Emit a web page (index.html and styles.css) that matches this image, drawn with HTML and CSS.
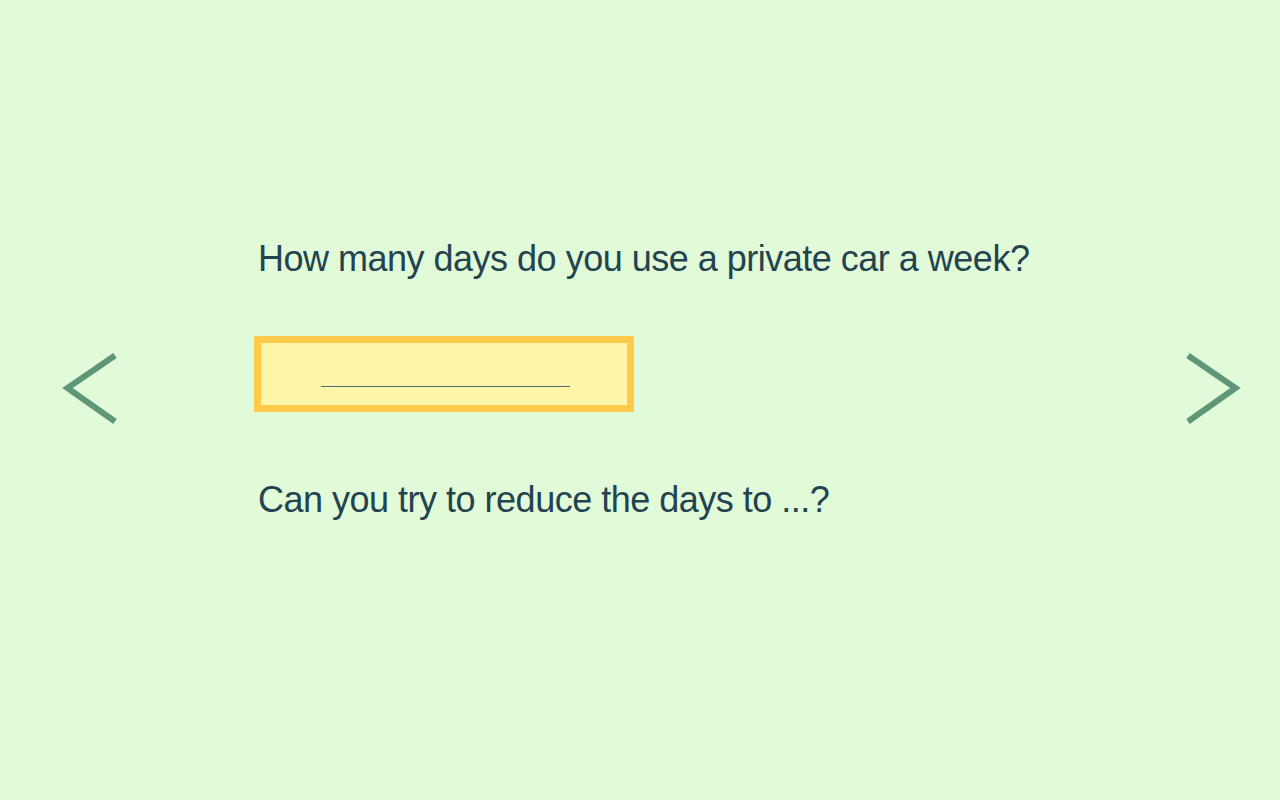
FILE: index.html
```html
<!DOCTYPE html>
<html lang="en">
<head>
<meta charset="utf-8">
<title>Question</title>
<link rel="stylesheet" href="styles.css">
</head>
<body>
<div class="stage">
  <button class="nav nav-prev" aria-label="Previous">
    <svg width="60" height="74" viewBox="0 0 60 74"><polyline points="55,3.5 7.5,36 55,69.5" fill="none" stroke="#5f9677" stroke-width="6"/></svg>
  </button>
  <main class="content">
    <p class="question">How many days do you use a private car a week?</p>
    <div class="answer-box"><span class="blank"></span></div>
    <p class="question second">Can you try to reduce the days to ...?</p>
  </main>
  <button class="nav nav-next" aria-label="Next">
    <svg width="60" height="74" viewBox="0 0 60 74"><polyline points="5,3.5 52.5,36 5,69.5" fill="none" stroke="#5f9677" stroke-width="6"/></svg>
  </button>
</div>
</body>
</html>
```
FILE: styles.css
```css
html, body {
  margin: 0;
  padding: 0;
}
body {
  background: #e1fad8;
  font-family: "Liberation Sans", Arial, sans-serif;
  color: #23434f;
  width: 1280px;
  height: 800px;
  overflow: hidden;
}
.stage {
  display: flex;
  align-items: flex-start;
  height: 800px;
  box-sizing: border-box;
  padding-top: 241px;
}
.nav {
  background: none;
  border: 0;
  padding: 0;
  margin: 111px 0 0 0;
  width: 60px;
  height: 74px;
  cursor: pointer;
  display: block;
}
.nav svg { display: block; }
.nav-prev { margin-left: 60px; }
.nav-next { margin-right: 37px; }
.content {
  flex: 1;
  margin-left: 138px;
  display: flex;
  flex-direction: column;
  align-items: flex-start;
}
.question {
  margin: 0;
  font-size: 36px;
  line-height: 36px;
  letter-spacing: -0.5px;
  white-space: nowrap;
}
.answer-box {
  margin-top: 59px;
  margin-left: -4px;
  width: 380px;
  height: 76px;
  box-sizing: border-box;
  border: 7px solid #ffc94a;
  background: #fff5a9;
  padding: 43px 0 0 60px;
}
.blank {
  display: block;
  width: 249px;
  height: 1px;
  background: #4b6b78;
}
.second {
  margin-top: 70px;
}
```
